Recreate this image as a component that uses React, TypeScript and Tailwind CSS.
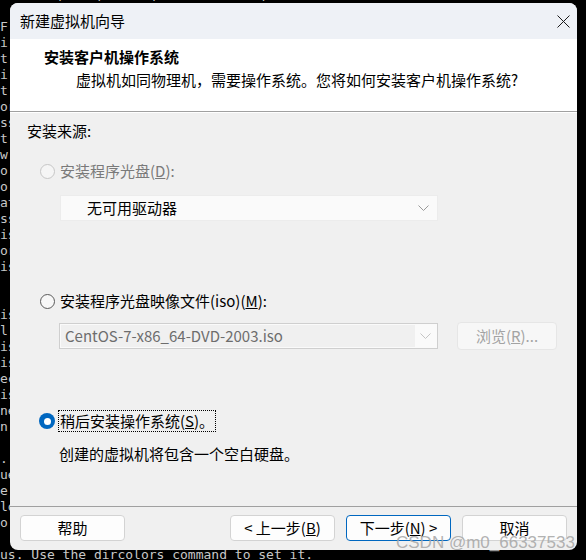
import React from "react"

const TERM_LINES = [
  "F",
  "i",
  "t",
  "i",
  "t",
  "or",
  "ss",
  "t",
  "w",
  "o",
  "o",
  "at",
  "ss",
  "is",
  "or",
  "is",
  "",
  "",
  "is",
  "l",
  "is",
  "is",
  "ec",
  "is",
  "ne",
  "n",
  "",
  ".",
  "ue",
  "e",
  "lo",
  "o",
  "",
  "us. Use the dircolors command to set it.",
]

const cjk = "font-['Segoe_UI','Noto_Sans_CJK_SC',sans-serif]"

function Radio({ state }: { state: "disabled" | "off" | "on" }) {
  if (state === "on") {
    return (
      <span className="flex h-[16px] w-[16px] shrink-0 items-center justify-center rounded-full bg-[#0067c0]">
        <span className="h-[7px] w-[7px] rounded-full bg-white" />
      </span>
    )
  }
  return (
    <span
      className={
        state === "disabled"
          ? "h-[15px] w-[15px] shrink-0 rounded-full border border-[#c6c6c6] bg-[#f5f5f5]"
          : "h-[15px] w-[15px] shrink-0 rounded-full border border-[#5a5a5a] bg-[#f7f7f7]"
      }
    />
  )
}

function Chevron({ color }: { color: string }) {
  return (
    <svg width="11" height="6" viewBox="0 0 11 6" fill="none" aria-hidden="true">
      <path d="M0.5 0.5L5.5 5.5L10.5 0.5" stroke={color} strokeWidth="1" />
    </svg>
  )
}

function Btn({ children, primary }: { children: React.ReactNode; primary?: boolean }) {
  return (
    <div
      className={
        "flex h-[26px] w-[105px] items-center justify-center rounded-[4px] bg-[#fdfdfd] text-[15px] text-black " +
        (primary ? "border border-[#0067c0]" : "border border-[#d3d3d3]")
      }
    >
      {children}
    </div>
  )
}

export default function App() {
  return (
    <div className={`relative h-[560px] w-[586px] overflow-hidden bg-black ${cjk}`}>
      {/* terminal behind the dialog */}
      <div className="absolute left-[2px] top-[-13px] whitespace-pre font-['DejaVu_Sans_Mono',monospace] text-[13px] leading-[16px] text-[#c8c8c8]">
        ive ess, ess, dir e, dircolors -b; see
      </div>
      <div className="absolute bottom-[-3px] left-0 flex flex-col font-['DejaVu_Sans_Mono',monospace] text-[13px] leading-[16px] text-[#c8c8c8]">
        {TERM_LINES.map((l, i) => (
          <div key={i} className="h-[16px] whitespace-pre">
            {l}
          </div>
        ))}
      </div>

      {/* dialog window */}
      <div className="absolute left-[10px] top-[3px] flex h-[547px] w-[567px] flex-col overflow-hidden rounded-[8px] bg-[#f0f0f0]">
        {/* title bar */}
        <div className="flex h-[36px] shrink-0 items-center justify-between bg-[#eef1f6] pl-[10px] pr-[7px]">
          <span className="text-[15px] text-black">新建虚拟机向导</span>
          <svg width="13" height="13" viewBox="0 0 13 13" aria-hidden="true">
            <path d="M0.5 0.5L12.5 12.5M12.5 0.5L0.5 12.5" stroke="#1a1a1a" strokeWidth="1" />
          </svg>
        </div>

        {/* header */}
        <div className="flex h-[72px] shrink-0 flex-col bg-white pl-[34px] pt-[7px]">
          <span className="text-[15px] font-bold leading-[22px] text-black">安装客户机操作系统</span>
          <span className="pl-[32px] pt-[1px] text-[15px] leading-[22px] text-black">
            虚拟机如同物理机，需要操作系统。您将如何安装客户机操作系统?
          </span>
        </div>
        <div className="h-[1px] shrink-0 bg-[#a0a0a0]" />
        <div className="h-[1px] shrink-0 bg-white" />

        {/* body */}
        <div className="flex flex-1 flex-col pl-[17px] pt-[8px] text-[15px] leading-[20px]">
          <span className="text-black">安装来源:</span>

          <div className="ml-[13px] mt-[20px] flex items-center gap-[5px]">
            <Radio state="disabled" />
            <span className="text-[#7a7a7a]">
              安装程序光盘(<span className="underline">D</span>):
            </span>
          </div>
          <div className="ml-[33px] mt-[14px] flex h-[26px] w-[378px] items-center justify-between border border-[#ececec] bg-[#fafafa] pl-[26px] pr-[8px]">
            <span className="text-black">无可用驱动器</span>
            <Chevron color="#9a9a9a" />
          </div>

          <div className="ml-[13px] mt-[70px] flex items-center gap-[5px]">
            <Radio state="off" />
            <span className="text-black">
              安装程序光盘映像文件(iso)(<span className="underline">M</span>):
            </span>
          </div>
          <div className="ml-[32px] mt-[11px] flex items-center gap-[19px]">
            <div className="flex h-[26px] w-[379px] items-center border border-[#cfcfcf] bg-[#fafafa] p-[1px]">
              <div className="flex h-full w-[354px] items-center bg-[#f0f0f0] pl-[4px] text-[#6d6d6d]">
                CentOS-7-x86_64-DVD-2003.iso
              </div>
              <div className="flex flex-1 items-center justify-center">
                <Chevron color="#c4c4c4" />
              </div>
            </div>
            <div className="flex h-[28px] w-[100px] items-center justify-center rounded-[4px] border border-[#e6e6e6] bg-[#f7f7f7] text-[#a3a3a3]">
              浏览(<span className="underline">R</span>)...
            </div>
          </div>

          <div className="ml-[12px] mt-[60px] flex items-center gap-[3px]">
            <Radio state="on" />
            <span className="border border-dotted border-black px-[1px] text-black">
              稍后安装操作系统(<span className="underline">S</span>)。
            </span>
          </div>
          <span className="ml-[32px] mt-[12px] text-black">创建的虚拟机将包含一个空白硬盘。</span>
        </div>

        {/* footer */}
        <div className="h-[1px] shrink-0 bg-[#a0a0a0]" />
        <div className="flex shrink-0 items-center justify-between px-[10px] pb-[9px] pt-[8px]">
          <Btn>帮助</Btn>
          <div className="flex gap-[11px]">
            <Btn>&lt; 上一步(<span className="underline">B</span>)</Btn>
            <Btn primary>
              下一步(<span className="underline">N</span>) &gt;
            </Btn>
            <Btn>取消</Btn>
          </div>
        </div>
      </div>

      {/* watermark */}
      <span className="absolute left-[396px] top-[530px] font-['Liberation_Sans',sans-serif] text-[17px] text-[#a8a8a8]/90">
        CSDN @m0_66337533
      </span>
    </div>
  )
}
